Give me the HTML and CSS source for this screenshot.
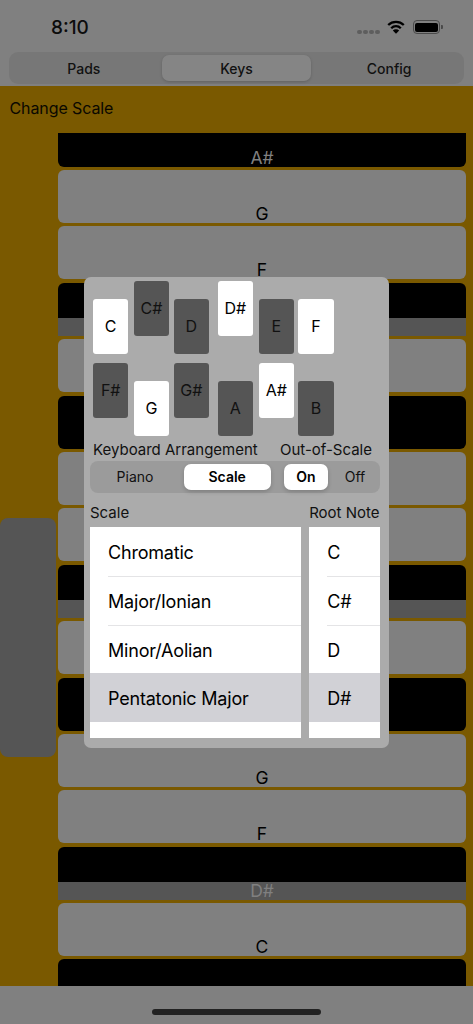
FILE: index.html
```html
<!DOCTYPE html>
<html lang="en">
<head>
<meta charset="utf-8">
<title>Change Scale</title>
<link rel="stylesheet" href="styles.css">
</head>
<body>
<div class="app">
  <header class="status">
    <span class="time">8:10</span>
    <div class="status-icons">
      <div class="dots"><i></i><i></i><i></i><i></i></div>
      <svg class="wifi" viewBox="0 0 18 14" aria-hidden="true">
        <path class="arc" d="M1.200 5A11.200 11.200 0 0 1 16.800 5"/>
        <path class="arc" d="M4.200 8.200A6.800 6.800 0 0 1 13.800 8.200"/>
        <path d="M9 13.800L5.800 10.500A4.500 4.500 0 0 1 12.200 10.500Z"/>
      </svg>
      <div class="battery"><div class="battery-fill"></div></div>
      <div class="battery-nub"></div>
    </div>
  </header>

  <nav class="tabs">
    <div class="tab">Pads</div>
    <div class="tab tab-on">Keys</div>
    <div class="tab">Config</div>
  </nav>

  <main class="main">
    <div class="title">Change Scale</div>
    <div class="board">
      <div class="rail"><div class="thumb"></div></div>
      <div class="keys">
        <div class="row black"><span>A#</span></div>
        <div class="row white"><span>G</span></div>
        <div class="row white"><span>F</span></div>
        <div class="row root"></div>
        <div class="row white"></div>
        <div class="row black"></div>
        <div class="row white"></div>
        <div class="row white"></div>
        <div class="row root"></div>
        <div class="row white"></div>
        <div class="row black"></div>
        <div class="row white"><span>G</span></div>
        <div class="row white"><span>F</span></div>
        <div class="row root"><span>D#</span></div>
        <div class="row white"><span>C</span></div>
        <div class="row black"></div>
      </div>
    </div>
  </main>

  <footer class="home"><div class="home-bar"></div></footer>

  <section class="modal">
    <div class="note-grid">
      <div class="note low on">C</div>
      <div class="note high">C#</div>
      <div class="note low">D</div>
      <div class="note high on">D#</div>
      <div class="note low">E</div>
      <div class="note low on">F</div>
    </div>
    <div class="note-grid second">
      <div class="note high">F#</div>
      <div class="note low on">G</div>
      <div class="note high">G#</div>
      <div class="note low">A</div>
      <div class="note high on">A#</div>
      <div class="note low">B</div>
    </div>

    <div class="labels">
      <span>Keyboard Arrangement</span>
      <span>Out-of-Scale</span>
    </div>

    <div class="segments">
      <div class="seg seg-wide">
        <div class="seg-item seg-piano">Piano</div>
        <div class="seg-item seg-on seg-scale">Scale</div>
      </div>
      <div class="seg seg-narrow">
        <div class="seg-item seg-on">On</div>
        <div class="seg-item seg-off">Off</div>
      </div>
    </div>

    <div class="pickers">
      <div class="picker picker-scale">
        <div class="picker-label">Scale</div>
        <ul class="list">
          <li>Chromatic</li>
          <li>Major/Ionian</li>
          <li>Minor/Aolian</li>
          <li class="sel">Pentatonic Major</li>
        </ul>
      </div>
      <div class="picker picker-root">
        <div class="picker-label">Root Note</div>
        <ul class="list">
          <li>C</li>
          <li>C#</li>
          <li>D</li>
          <li class="sel">D#</li>
        </ul>
      </div>
    </div>
  </section>
</div>
</body>
</html>
```

FILE: styles.css
```css
* { box-sizing: border-box; }
html, body { margin: 0; padding: 0; }
body {
  width: 473px;
  height: 1024px;
  overflow: hidden;
  background: #808080;
  color: #000;
  font-family: Inter, "Noto Sans", "Liberation Sans", sans-serif;
}
.app {
  position: relative;
  width: 473px;
  height: 1024px;
  display: flex;
  flex-direction: column;
}

/* status bar */
.status {
  height: 52px;
  flex: none;
  display: flex;
  justify-content: space-between;
  padding: 17.500px 30.500px 0 51px;
}
.time {
  font-size: 19px;
  font-weight: 500;
  line-height: 20px;
  color: #0c0c0c;
}
.status-icons {
  display: flex;
  align-items: flex-start;
  padding-top: 2.500px;
}
.dots {
  display: flex;
  gap: 1.600px;
  margin-top: 9.500px;
  margin-right: 7px;
}
.dots i {
  display: block;
  width: 4.400px;
  height: 4.400px;
  border-radius: 50%;
  background: #5e5e5e;
}
.wifi {
  width: 18px;
  height: 14px;
  fill: #000;
  margin-right: 8px;
}
.wifi .arc {
  fill: none;
  stroke: #000;
  stroke-width: 2.300px;
}
.battery {
  width: 27.500px;
  height: 14px;
  border: 1px solid #4a4a4a;
  border-radius: 4px;
  padding: 1.500px;
}
.battery-fill {
  height: 100%;
  background: #000;
  border-radius: 2px;
}
.battery-nub {
  width: 1.500px;
  height: 4.500px;
  margin: 4.800px 0 0 1px;
  background: #4a4a4a;
  border-radius: 0 1px 1px 0;
}

/* tabs */
.tabs {
  flex: none;
  height: 32px;
  margin: 0 9px;
  padding: 3px 0;
  background: #777;
  border-radius: 9px;
  display: flex;
}
.tab {
  flex: 1 1 0;
  font-size: 14px;
  font-weight: 500;
  line-height: 27px;
  text-align: center;
  color: #111;
}
.tab-on {
  margin: 0 3px;
  background: #858585;
  border-radius: 7px;
  box-shadow: 0 1px 3px rgba(0, 0, 0, .18);
}

/* main */
.main {
  flex: 1;
  margin-top: 2px;
  min-height: 0;
  background: #7a5900;
  display: flex;
  flex-direction: column;
}
.title {
  flex: none;
  height: 47px;
  padding: 12px 0 0 9.500px;
  font-size: 16px;
  letter-spacing: -.1px;
  line-height: 20px;
  color: #0a0800;
}
.board {
  flex: 1;
  min-height: 0;
  overflow: hidden;
  display: flex;
}
.rail {
  flex: none;
  width: 58px;
  padding-top: 385px;
}
.thumb {
  width: 56px;
  height: 239px;
  background: #555;
  border-radius: 8px;
}
.keys {
  flex: 1;
  margin: -19.400px 7px 0 0;
  display: flex;
  flex-direction: column;
  gap: 3.400px;
}
.row {
  flex: none;
  height: 53px;
  border-radius: 6px;
  display: flex;
  align-items: flex-end;
  justify-content: center;
  font-size: 17.500px;
  line-height: 20px;
}
.row span { display: block; margin-bottom: -1px; }
.white { background: #808080; color: #000; }
.black { background: #000; color: #808080; }
.root {
  background: linear-gradient(#000 0, #000 35px, #555 35px, #555 100%);
  color: #808080;
  border-radius: 6px 6px 0 0;
}

/* home */
.home {
  flex: none;
  height: 38px;
  background: #808080;
  padding-top: 23px;
}
.home-bar {
  width: 169px;
  height: 6px;
  margin: 0 auto;
  border-radius: 3px;
  background: #222;
}

/* modal */
.modal {
  position: absolute;
  left: 84px;
  top: 277px;
  width: 305px;
  height: 471px;
  padding: 4px 9px 0 6px;
  background: #ababab;
  border-radius: 7px;
  display: flex;
  flex-direction: column;
}
.note-grid {
  display: grid;
  grid-template-columns: 40.800px 39.800px 44px 41px 39.600px 35.400px;
  height: 72.700px;
  margin-left: 3px;
}
.note-grid.second {
  margin-top: 9px;
  height: 73px;
}
.note {
  width: 35.400px;
  height: 55px;
  border-radius: 3px;
  background: #555;
  font-size: 16px;
  line-height: 55px;
  text-align: center;
  color: #111;
}
.note.on { background: #fff; color: #000; }
.note.high { align-self: start; }
.note.low { align-self: end; }

.labels {
  display: flex;
  justify-content: space-between;
  margin: 5px 8px 0 3px;
  font-size: 15px;
  line-height: 18px;
  color: #111;
}

.segments {
  display: flex;
  margin-top: 2.300px;
  height: 31.700px;
  background: #9b9b9b;
  border-radius: 8px;
  padding: 2.700px 0;
}
.seg {
  display: flex;
  align-items: stretch;
}
.seg-wide { width: 180.700px; margin-right: 13.300px; }
.seg-piano { width: 90px; margin-right: 3.700px; }
.seg-scale { width: 87px; }
.seg-narrow { flex: 1; }
.seg-narrow .seg-on { width: 44px; }
.seg-off { flex: 1; padding-left: 2px; }
.seg-item {
  font-size: 14px;
  line-height: 26px;
  text-align: center;
  color: #111;
}
.seg-on {
  background: #fff;
  color: #000;
  font-weight: 560;
  border-radius: 7px;
  box-shadow: 0 2px 4px rgba(0, 0, 0, .18);
}

.pickers {
  display: flex;
  gap: 8.700px;
  margin-top: 10px;
}
.picker-scale { width: 210.500px; }
.picker-root { flex: 1; }
.picker-label {
  height: 24.600px;
  font-size: 15px;
  line-height: 20px;
  white-space: nowrap;
  color: #111;
}
.list {
  list-style: none;
  margin: 0;
  padding: 0;
  height: 211px;
  background: #fff;
  overflow: hidden;
}
.list li {
  position: relative;
  height: 48.700px;
  padding-left: 18px;
  font-size: 18px;
  letter-spacing: -.2px;
  line-height: 51.700px;
  color: #000;
}
.list li + li::before {
  content: "";
  position: absolute;
  left: 18px;
  right: 0;
  top: 0;
  height: 1px;
  background: #e4e4e6;
}
.list li.sel { background: #d1d1d6; }
.list li.sel::before { display: none; }
```
